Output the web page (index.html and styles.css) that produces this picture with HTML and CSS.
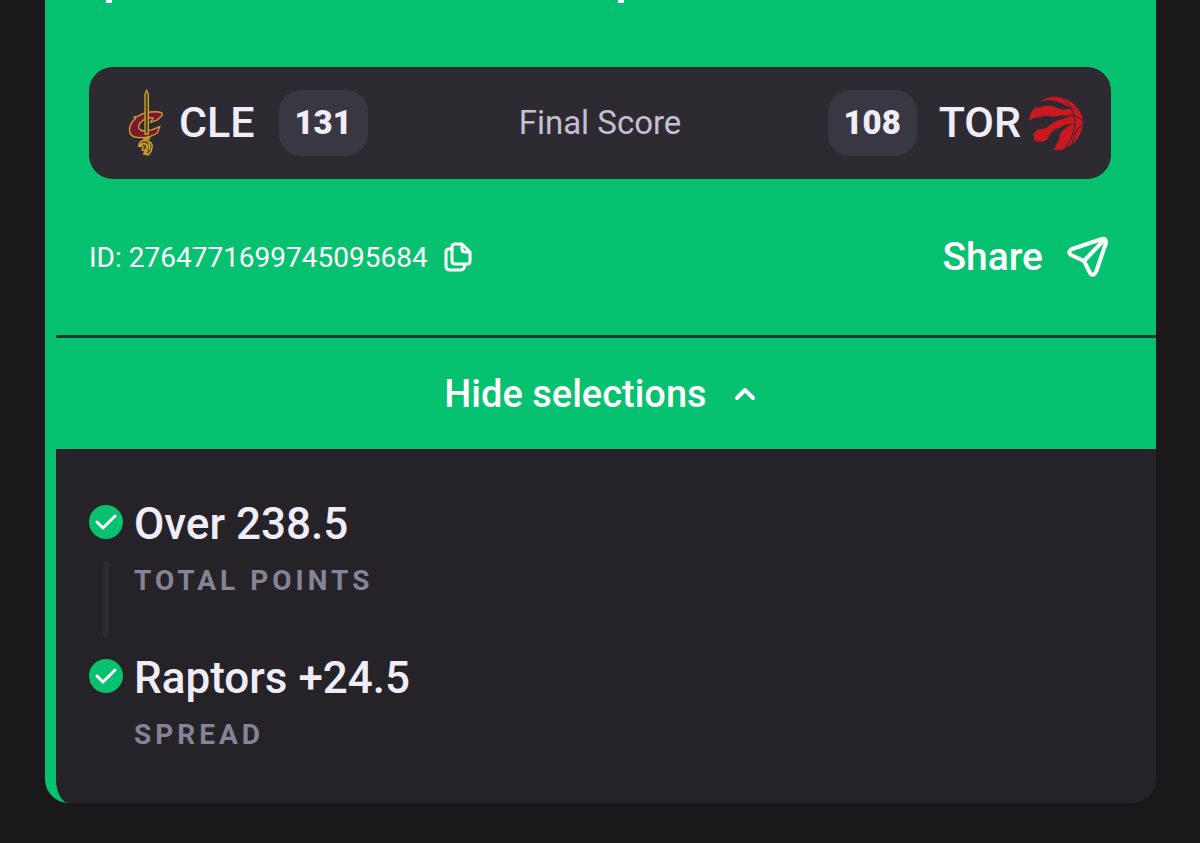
FILE: index.html
```
<!DOCTYPE html>
<html lang="en">

<head>
    <meta charset="utf-8" />
    <title>Bet Result</title>
    <link rel="stylesheet" href="styles.css">
</head>

<body>

    <main class="card">

        <section class="summary">

            <div class="clipped"><span></span><span></span></div>

            <div class="scoreboard">
                <div class="team">
                    <svg class="logo-cle" viewBox="20 12 108 204" aria-hidden="true">
                        <path d="M124 83 C108 78 76 79 51 94 L41 96 L46 100 C30 115 24 132 30 146 C40 166 89 158 111 144 L118 125 C92 138 66 143 57 132 C49 120 66 101 90 98 L98 99 L91 112 L111 105 L126 91 Z" fill="#7b1834" stroke="#d59c2c" stroke-width="4"/>
                        <path d="M74 147 V28 L79 16 L84 28 V147 Z" fill="#4a3b2d" stroke="#cda22e" stroke-width="4"/>
                        <path d="M65 157 H92 L87 164 H70 Z" fill="#c99b25"/>
                        <path d="M55 184 C56 169 70 161 86 169 C101 176 97 197 84 210 L70 207 L76 195 L66 196 L67 184 Z" fill="#65502b" stroke="#cda22e" stroke-width="4"/>
                        <path d="M58 182 C67 173 78 174 81 183 L78 207 M86 173 L88 193" fill="none" stroke="#e0b32e" stroke-width="4"/>
                    </svg>
                    <span class="team-name">CLE</span>
                    <span class="score">131</span>
                </div>
                <span class="status">Final Score</span>
                <div class="team team-right">
                    <span class="score">108</span>
                    <span class="team-name">TOR</span>
                    <svg class="logo-tor" viewBox="24 17 164 165" aria-hidden="true">
                        <g fill="#c91820">
                            <path d="M58 34 C75 21 94 16 112 19 C136 22 156 35 166 47 L174 58 C157 51 144 49 132 43 C110 29 85 25 58 34 Z"/>
                            <path d="M25 92 C25 75 33 59 44 50 C57 55 65 45 80 46 C99 43 107 55 128 57 C146 57 160 50 174 57 C183 68 187 79 187 89 L160 78 C143 80 128 71 111 77 C94 83 85 73 67 77 C55 84 39 77 25 92 Z"/>
                            <path d="M36 136 C40 126 47 118 56 116 C68 118 80 112 89 103 C103 90 119 91 134 82 C146 78 157 79 162 77 L187 88 L187 106 L162 102 C143 98 128 105 114 115 C96 116 86 134 80 146 C73 159 58 151 48 155 C42 151 34 144 42 140 Z"/>
                            <path d="M98 179 C106 172 105 164 111 156 C121 145 112 132 125 122 C135 113 140 106 153 103 L187 104 C184 134 165 160 143 169 L137 166 L130 178 C120 178 114 184 98 179 Z"/>
                        </g>
                        <path d="M120 18 C143 35 163 64 163 96 C163 128 149 151 138 168 M139 78 C157 71 174 78 188 93 M151 169 C165 145 159 113 187 107" fill="none" stroke="#2d2b31" stroke-width="3"/>
                    </svg>
                </div>
            </div>

            <div class="actions">
                <div class="bet-id">
                    <span>ID: 2764771699745095684</span>
                    <button class="icon-btn" aria-label="Copy ID">
                        <svg width="28" height="30" viewBox="0 0 28 30" fill="none" stroke="currentColor" stroke-width="3" stroke-linejoin="round" aria-hidden="true">
                            <path d="M11 2 H18 L26 10 V19 Q26 22 23 22 H11 Q8 22 8 19 V5 Q8 2 11 2 Z"/>
                            <path d="M18 2 V7 Q18 10 21 10 H26"/>
                            <path d="M8 7 H5 Q2 7 2 10 V24 Q2 28 6 28 H17 Q20 28 21 23" stroke-linecap="round"/>
                        </svg>
                    </button>
                </div>
                <button class="share">
                    Share
                    <svg width="42" height="42" viewBox="0 0 42 42" fill="none" stroke="currentColor" stroke-width="4" stroke-linejoin="round" stroke-linecap="round" aria-hidden="true">
                        <path d="M35 3 L5 13 Q0 16 4 19 L17 25 L23 37 Q26 41 29 36 L39 7 Q39 2 35 3 Z"/>
                        <path d="M17 25 L37 4"/>
                    </svg>
                </button>
            </div>

        </section>

        <button class="toggle" aria-expanded="true">
            Hide selections
            <svg width="20" height="14" viewBox="0 0 20 14" fill="none" stroke="currentColor" stroke-width="4" stroke-linecap="round" stroke-linejoin="round" aria-hidden="true">
                <path d="M2 11 L10 3 L18 11"/>
            </svg>
        </button>

        <ul class="selections">
            <li>
                <div class="marker">
                    <svg width="34" height="34" viewBox="0 0 34 34" aria-hidden="true">
                        <circle cx="17" cy="17" r="17" fill="#06c270"/>
                        <path d="M8 17 L14 23 L26 11" fill="none" stroke="#fff" stroke-width="3" stroke-linecap="round" stroke-linejoin="round"/>
                    </svg>
                    <span class="connector"></span>
                </div>
                <div>
                    <h2>Over 238.5</h2>
                    <p>TOTAL POINTS</p>
                </div>
            </li>
            <li>
                <div class="marker">
                    <svg width="34" height="34" viewBox="0 0 34 34" aria-hidden="true">
                        <circle cx="17" cy="17" r="17" fill="#06c270"/>
                        <path d="M8 17 L14 23 L26 11" fill="none" stroke="#fff" stroke-width="3" stroke-linecap="round" stroke-linejoin="round"/>
                    </svg>
                </div>
                <div>
                    <h2>Raptors +24.5</h2>
                    <p>SPREAD</p>
                </div>
            </li>
        </ul>

    </main>

</body>

</html>
```
FILE: styles.css
```
* {
    box-sizing: border-box;
}

body {
    margin: 0;
    padding: 0 44px 40px 45px;
    background: #1a181b;
    color: #f0edf8;
    font-family: Roboto, sans-serif;
}

button {
    padding: 0;
    border: 0;
    background: none;
    color: #fff;
    font: inherit;
    cursor: pointer;
}

svg {
    display: block;
    flex: none;
}

.card {
    border-left: 11px solid #06c270;
    border-radius: 0 0 24px 24px;
    background: #252328;
    overflow: hidden;
}

.summary {
    padding: 0 45px 54px 33px;
    background: #06c270;
}

/* bottoms of the title's descenders */
.clipped {
    display: flex;
    gap: 506px;
    height: 67px;
    padding-left: 17px;
}

.clipped span {
    width: 6px;
    height: 3px;
    background: #fff;
}

.scoreboard {
    display: grid;
    grid-template-columns: 1fr auto 1fr;
    align-items: center;
    height: 112px;
    padding: 0 28px;
    border-radius: 24px;
    background: #2d2b31;
}

.team {
    display: flex;
    align-items: center;
    padding-left: 10px;
}

.team-right {
    justify-content: flex-end;
}

.logo-cle {
    width: 36px;
    height: 68px;
}

.logo-tor {
    width: 54px;
    height: 55px;
    margin-left: 8px;
}

.team-name {
    margin-left: 16px;
    font-size: 43px;
    font-weight: 500;
    line-height: 52px;
    padding-bottom: 2px;
}

.team-right .team-name {
    margin-left: 22px;
}

.score {
    width: 89px;
    border-radius: 22px;
    background: #393741;
    font-size: 33px;
    font-weight: 900;
    line-height: 66px;
    text-align: center;
}

.team-name + .score {
    margin-left: 24px;
}

.status {
    padding-bottom: 2px;
    color: #c4bfd3;
    font-size: 33px;
}

.actions {
    display: flex;
    justify-content: space-between;
    align-items: center;
    height: 102px;
    padding-top: 54px;
}

.bet-id {
    display: flex;
    align-items: center;
    gap: 16px;
    color: #fff;
    font-size: 28px;
}

.share {
    display: flex;
    align-items: center;
    gap: 24px;
    padding-right: 2px;
    font-size: 39px;
    font-weight: 500;
}

.toggle {
    display: flex;
    justify-content: center;
    align-items: center;
    gap: 28px;
    width: 100%;
    height: 114px;
    padding-right: 13px;
    border-top: 3px solid #1d3b30;
    background: #06c270;
    font-size: 38px;
    font-weight: 500;
}

.selections {
    margin: 0;
    padding: 48px 33px 52px;
    list-style: none;
}

.selections li {
    display: flex;
    gap: 11px;
}

.selections li + li {
    margin-top: 54px;
}

.marker {
    display: flex;
    flex-direction: column;
    align-items: center;
    padding-top: 8px;
}

.connector {
    width: 6px;
    height: 76px;
    margin: 22px 0 -40px;
    background: #2d2b31;
}

h2 {
    margin: 0;
    font-size: 44px;
    font-weight: 500;
    line-height: 54px;
}

p {
    margin: 14px 0 0;
    color: #858396;
    font-size: 28px;
    font-weight: 700;
    letter-spacing: 4px;
    line-height: 32px;
}
```
